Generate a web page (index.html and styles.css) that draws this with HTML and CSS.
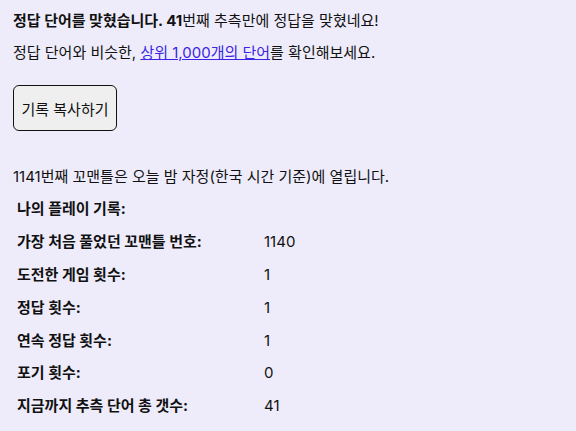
FILE: index.html
```html
<!DOCTYPE html>
<html lang="ko">
<head>
    <meta charset="UTF-8">
    <meta name="viewport" content="width=device-width, initial-scale=1.0">
    <title>꼬맨틀</title>
    <link rel="stylesheet" href="styles.css">
</head>
<body>
    <div class="result">
        <p class="line first"><b>정답 단어를 맞혔습니다. 41</b>번째 추측만에 정답을 맞혔네요!</p>
        <p class="line">정답 단어와 비슷한, <a href="#">상위 1,000개의 단어</a>를 확인해보세요.</p>
        <button class="copy-btn">기록 복사하기</button>
        <p class="line next">1141번째 꼬맨틀은 오늘 밤 자정(한국 시간 기준)에 열립니다.</p>
        <table class="stats">
            <tr><th colspan="2">나의 플레이 기록:</th></tr>
            <tr><th>가장 처음 풀었던 꼬맨틀 번호:</th><td>1140</td></tr>
            <tr><th>도전한 게임 횟수:</th><td>1</td></tr>
            <tr><th>정답 횟수:</th><td>1</td></tr>
            <tr><th>연속 정답 횟수:</th><td>1</td></tr>
            <tr><th>포기 횟수:</th><td>0</td></tr>
            <tr><th>지금까지 추측 단어 총 갯수:</th><td>41</td></tr>
        </table>
    </div>
</body>
</html>
```

FILE: styles.css
```css
* {
    margin: 0;
    padding: 0;
}

body {
    background: #eeecfa;
    color: #111;
    font-family: "Inter", "Noto Sans CJK KR", sans-serif;
    font-size: 15px;
    line-height: 22px;
}

.result {
    padding: 10px 13px;
}

.line {
    margin-bottom: 10px;
}

.line a {
    color: #3b24e6;
}

.copy-btn {
    display: block;
    margin-top: 21px;
    height: 46px;
    padding: 0 7.5px;
    font-family: inherit;
    font-size: 15px;
    color: #111;
    background: #efefef;
    border: 1px solid #111;
    border-radius: 6px;
}

.next {
    margin-top: 35px;
    margin-bottom: 4px;
}

.stats {
    border-spacing: 2px;
}

.stats th,
.stats td {
    height: 28.8px;
    padding: 1px 2px;
    text-align: left;
    vertical-align: middle;
}

.stats th {
    font-weight: bold;
    width: 241px;
}

.stats td {
    font-weight: normal;
}
```
